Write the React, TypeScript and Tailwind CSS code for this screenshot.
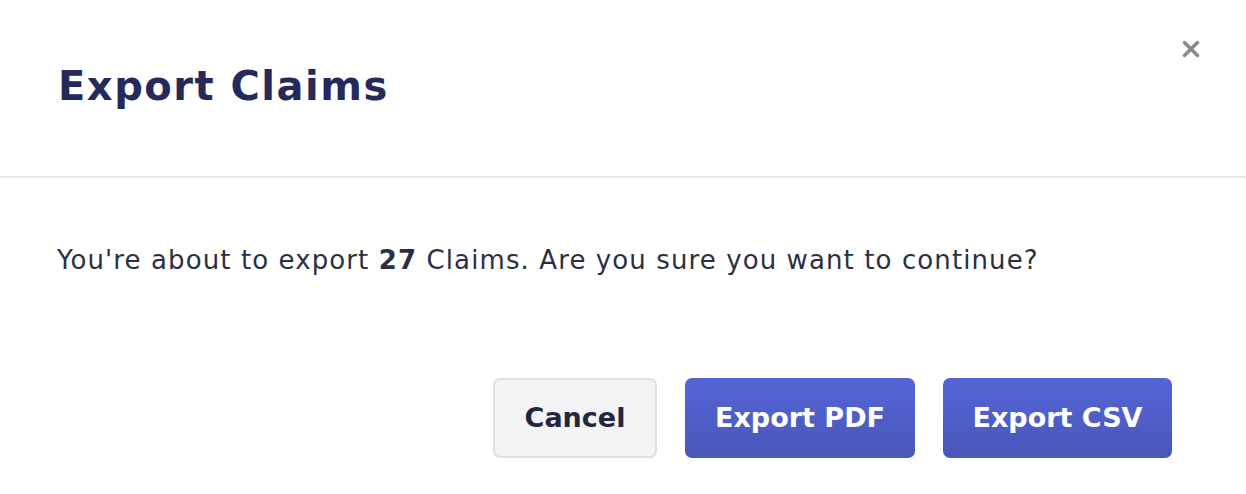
import { X } from "lucide-react";

export default function App() {
  return (
    <div className="w-[1246px] h-[494px] bg-white flex flex-col" style={{ fontFamily: "'DejaVu Sans', Inter, sans-serif" }}>
      {/* Header */}
      <div className="relative h-[178px] flex items-center px-[58px] border-b-2 border-[#e6e6eb]">
        <h1 className="text-[40px] font-semibold text-[#252a5b] tracking-[1.5px] -mt-[5px]">Export Claims</h1>
        <button className="absolute right-[42px] top-[36px] text-[#8a8a8a]">
          <X size={26} strokeWidth={3.2} />
        </button>
      </div>

      {/* Body */}
      <div className="px-[57px] pt-[63px]">
        <p className="text-[26px] text-[#2b2f45] tracking-[1.1px]">
          You're about to export <span className="font-bold">27</span> Claims. Are you sure you want to continue?
        </p>
      </div>

      {/* Footer */}
      <div className="flex justify-end gap-[28px] pr-[74px] pt-[98px]">
        <button className="w-[164px] h-[80px] rounded-[7px] bg-[#f3f3f6] border-2 border-[#dedee3] text-[#23263f] text-[27px] font-bold">
          Cancel
        </button>
        <button className="w-[230px] h-[80px] rounded-[7px] bg-gradient-to-b from-[#5565d6] to-[#4a56b9] text-white text-[27px] font-bold">
          Export PDF
        </button>
        <button className="w-[229px] h-[80px] rounded-[7px] bg-gradient-to-b from-[#5565d6] to-[#4a56b9] text-white text-[27px] font-bold">
          Export CSV
        </button>
      </div>
    </div>
  );
}
